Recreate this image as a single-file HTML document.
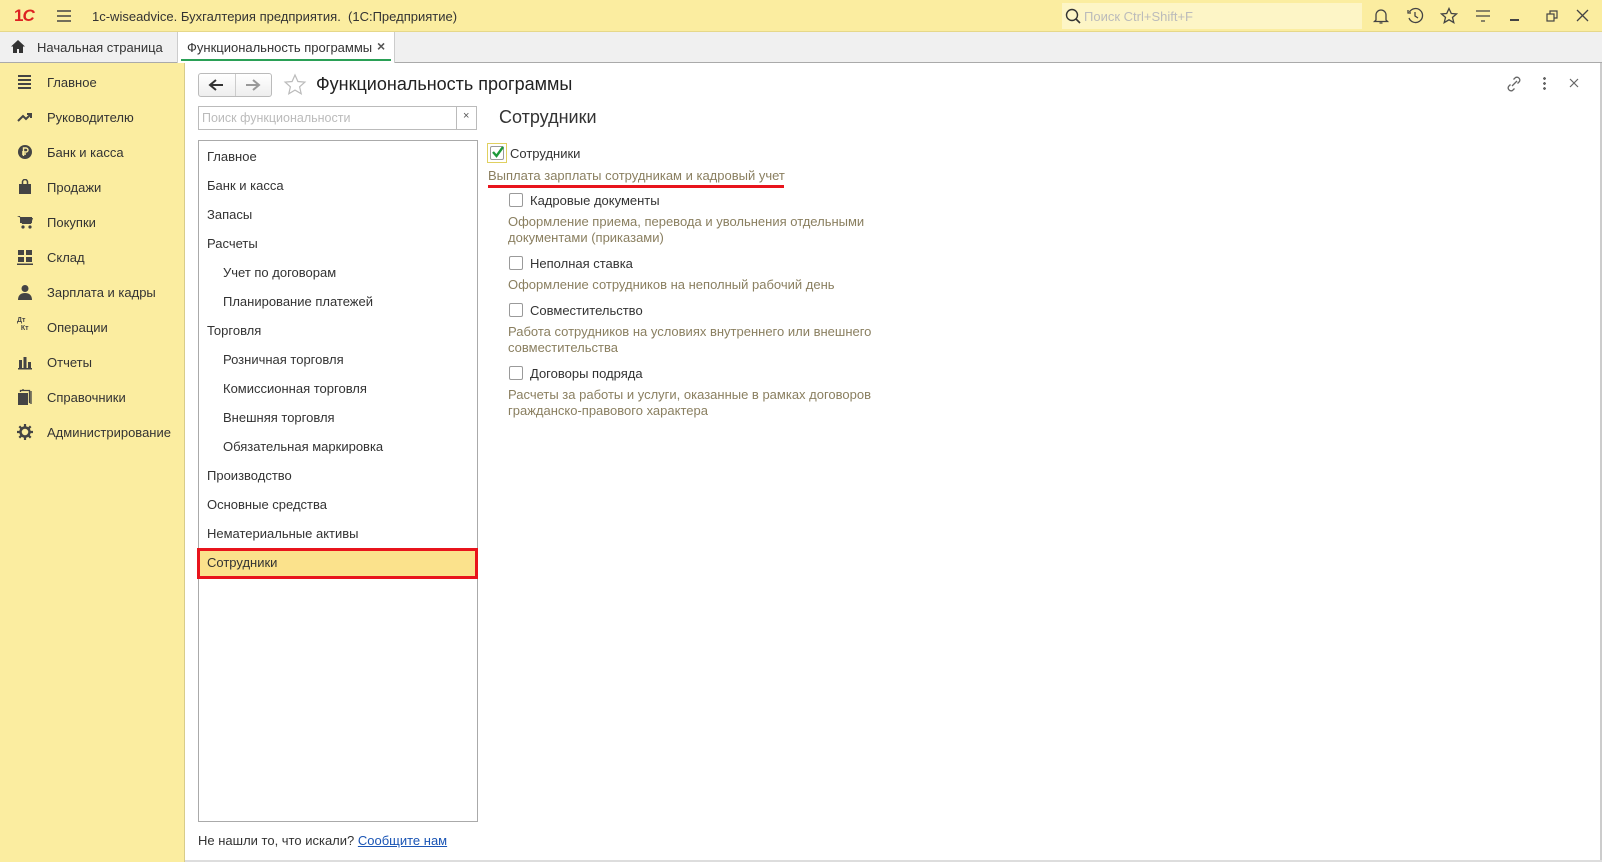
<!DOCTYPE html>
<html><head><meta charset="utf-8"><style>
*{box-sizing:border-box;margin:0;padding:0}
body{width:1602px;height:862px;overflow:hidden;background:#fff;font-family:"Liberation Sans",Arial,sans-serif;font-size:13px;color:#333;position:relative}
.abs{position:absolute}
#title{left:0;top:0;width:1602px;height:32px;background:#fbeda0;border-bottom:1px solid #e6d88a}
#tabs{left:0;top:32px;width:1602px;height:31px;background:#f0f0f0;border-bottom:1px solid #aaa}
#side{left:0;top:63px;width:185px;height:799px;background:#fbeda0;border-right:1px solid #d8cc8a}
.si{position:absolute;left:47px;font-size:13px;color:#333}
.ic{position:absolute;left:17px;width:16px;height:16px}
.li{position:absolute;left:8px;font-size:13px;color:#333}
.li.s{left:24px}
.cb{position:absolute;width:14px;height:14px;border:1px solid #9a9a9a;border-radius:2px;background:#fff}
.desc{position:absolute;color:#8a7f60;font-size:13px;line-height:16px}
.lbl{position:absolute;color:#333;font-size:13px}
</style></head><body>
<div id="title" class="abs">
 <div class="abs" style="left:14px;top:6px;color:#d22;font-weight:bold;font-size:17px;letter-spacing:-1px">1<span style="font-style:italic">C</span></div>
 <svg class="abs" style="left:57px;top:10px" width="14" height="12"><path d="M0 1h14M0 6h14M0 11h14" stroke="#444" stroke-width="1.4"/></svg>
 <div class="abs" style="left:92px;top:9px;font-size:13px;color:#333">1c-wiseadvice. Бухгалтерия предприятия.&nbsp; (1С:Предприятие)</div>
 <div class="abs" style="left:1062px;top:3px;width:300px;height:26px;background:#fdf5c6"></div>
 <svg class="abs" style="left:1065px;top:8px" width="16" height="16"><circle cx="7" cy="7" r="5.5" fill="none" stroke="#333" stroke-width="1.4"/><path d="M11 11l4 4" stroke="#333" stroke-width="1.6"/></svg>
 <div class="abs" style="left:1084px;top:9px;color:#bbb;font-size:13px">Поиск Ctrl+Shift+F</div>
 <svg class="abs" style="left:1372px;top:7px" width="18" height="18" fill="none" stroke="#444" stroke-width="1.3"><path d="M4 13V8a5 5 0 0110 0v5l1.5 1.5h-13z M7.5 16h3"/></svg>
 <svg class="abs" style="left:1406px;top:7px" width="18" height="18" fill="none" stroke="#444" stroke-width="1.3"><path d="M3.5 5A7 7 0 113 11M2 3v3h3M9 5v4l3 2"/></svg>
 <svg class="abs" style="left:1440px;top:7px" width="18" height="18" fill="none" stroke="#444" stroke-width="1.3"><path d="M9 1.5l2.3 5 5.2.4-4 3.5 1.3 5.2L9 12.8l-4.8 2.8 1.3-5.2-4-3.5 5.2-.4z"/></svg>
 <svg class="abs" style="left:1475px;top:8px" width="16" height="16" stroke="#444" stroke-width="1.3"><path d="M1 3h14M1 8h14M6 13h4"/></svg>
 <div class="abs" style="left:1510px;top:19px;width:9px;height:1.5px;background:#444"></div>
 <svg class="abs" style="left:1546px;top:10px" width="12" height="12" fill="none" stroke="#444" stroke-width="1.2"><rect x="1" y="4" width="7" height="7"/><path d="M4 4V1h7v7H8"/></svg>
 <svg class="abs" style="left:1576px;top:9px" width="13" height="13" stroke="#444" stroke-width="1.3"><path d="M1 1l11 11M12 1L1 12"/></svg>
</div>
<div id="tabs" class="abs">
 <svg class="abs" style="left:11px;top:8px" width="14" height="13"><path d="M7 0L0 6.5h2V13h4V9h2v4h4V6.5h2z" fill="#333"/></svg>
 <div class="abs" style="left:37px;top:8px;font-size:13px">Начальная страница</div>
 <div class="abs" style="left:177px;top:0;width:218px;height:31px;background:#fff;border-left:1px solid #ccc;border-right:1px solid #ccc"></div>
 <div class="abs" style="left:187px;top:8px;font-size:13px">Функциональность программы</div>
 <div class="abs" style="left:377px;top:6px;font-size:14px;font-weight:bold;color:#555">×</div>
 <div class="abs" style="left:181px;top:27px;width:210px;height:2px;background:#2aa056"></div>
</div>
<div id="side" class="abs">
 <svg class="ic" style="top:11px" viewBox="0 0 16 16"><path d="M1 2h13M1 6h13M1 10h13M1 14h13" stroke="#444" stroke-width="2"/></svg><div class="si" style="top:12px">Главное</div>
 <svg class="ic" style="top:46px" viewBox="0 0 16 16"><path d="M1 12l5-5 3 3 5-5M10 5h4v4" stroke="#444" stroke-width="2" fill="none"/></svg><div class="si" style="top:47px">Руководителю</div>
 <svg class="ic" style="top:81px" viewBox="0 0 16 16"><circle cx="8" cy="8" r="7" fill="#444"/><path d="M6.5 12V4h2.5a2 2 0 010 4H5M5 10h4" stroke="#fbeda0" stroke-width="1.4" fill="none"/></svg><div class="si" style="top:82px">Банк и касса</div>
 <svg class="ic" style="top:116px" viewBox="0 0 16 16"><rect x="2" y="5" width="12" height="10" fill="#444"/><path d="M5.5 6V3a2.5 2.5 0 015 0v3" stroke="#444" stroke-width="1.5" fill="none"/></svg><div class="si" style="top:117px">Продажи</div>
 <svg class="ic" style="top:151px" viewBox="0 0 16 16"><path d="M0 2h3l2 8h9l2-6H4" fill="#444"/><rect x="3" y="3" width="12" height="6" fill="#444"/><circle cx="6" cy="13" r="1.6" fill="#444"/><circle cx="13" cy="13" r="1.6" fill="#444"/></svg><div class="si" style="top:152px">Покупки</div>
 <svg class="ic" style="top:186px" viewBox="0 0 16 16"><rect x="1" y="1" width="6" height="5" fill="#444"/><rect x="9" y="1" width="6" height="5" fill="#444"/><rect x="1" y="8" width="6" height="5" fill="#444"/><rect x="9" y="8" width="6" height="5" fill="#444"/><rect x="0" y="14.5" width="16" height="1.5" fill="#444"/></svg><div class="si" style="top:187px">Склад</div>
 <svg class="ic" style="top:221px" viewBox="0 0 16 16"><circle cx="8" cy="4.5" r="3.5" fill="#444"/><path d="M1 16c0-5 3-7 7-7s7 2 7 7z" fill="#444"/></svg><div class="si" style="top:222px">Зарплата и кадры</div>
 <div class="ic" style="top:254px;font-size:7px;font-weight:bold;color:#444;line-height:8px">Дт<br>&nbsp;&nbsp;Кт</div><div class="si" style="top:257px">Операции</div>
 <svg class="ic" style="top:291px" viewBox="0 0 16 16"><rect x="2" y="6" width="3" height="8" fill="#444"/><rect x="6.5" y="3" width="3" height="11" fill="#444"/><rect x="11" y="8" width="3" height="6" fill="#444"/><rect x="1" y="14" width="14" height="1.5" fill="#444"/></svg><div class="si" style="top:292px">Отчеты</div>
 <svg class="ic" style="top:326px" viewBox="0 0 16 16"><rect x="1" y="4" width="10" height="12" fill="#444"/><path d="M3.5 3V1.5h9v12H12M6 1V0" stroke="#444" stroke-width="1.3" fill="none"/><path d="M14 2v13" stroke="#444" stroke-width="1.3"/></svg><div class="si" style="top:327px">Справочники</div>
 <svg class="ic" style="top:361px" viewBox="0 0 16 16"><circle cx="8" cy="8" r="4.5" fill="none" stroke="#444" stroke-width="2.5"/><path d="M8 0v4M8 12v4M0 8h4M12 8h4M2.3 2.3l2.8 2.8M10.9 10.9l2.8 2.8M2.3 13.7l2.8-2.8M10.9 5.1l2.8-2.8" stroke="#444" stroke-width="2.2"/></svg><div class="si" style="top:362px">Администрирование</div>
</div>
<!-- main -->
<div class="abs" style="left:198px;top:73px;width:74px;height:24px;border:1px solid #bbb;border-radius:3px;background:linear-gradient(#fff,#eee)"></div>
<div class="abs" style="left:235px;top:74px;width:1px;height:22px;background:#ccc"></div>
<svg class="abs" style="left:208px;top:78px" width="16" height="14"><path d="M15 7H3M8 2L2 7l6 5" stroke="#333" stroke-width="2" fill="none"/></svg>
<svg class="abs" style="left:245px;top:78px" width="16" height="14"><path d="M1 7h12M8 2l6 5-6 5" stroke="#999" stroke-width="2" fill="none"/></svg>
<svg class="abs" style="left:283px;top:73px" width="24" height="24"><path d="M12 2l2.9 6.5 7 .6-5.3 4.7 1.6 7L12 17.1l-6.2 3.7 1.6-7L2.1 9.1l7-.6z" fill="none" stroke="#bbb" stroke-width="1.2"/></svg>
<div class="abs" style="left:316px;top:74px;font-size:18px;color:#222">Функциональность программы</div>
<svg class="abs" style="left:1505px;top:75px" width="18" height="18" fill="none" stroke="#666" stroke-width="1.3"><path d="M7 11l5-5M8.5 4.5l2-2a3 3 0 014 4l-2 2M9.5 13.5l-2 2a3 3 0 01-4-4l2-2"/></svg>
<div class="abs" style="left:1543px;top:76px;width:3px;height:14px;background:radial-gradient(circle,#666 1.3px,transparent 1.5px) 0 0/3px 5px"></div>
<svg class="abs" style="left:1569px;top:78px" width="10" height="10" stroke="#666" stroke-width="1.2"><path d="M1 1l8 8M9 1L1 9"/></svg>

<div class="abs" style="left:198px;top:106px;width:279px;height:24px;border:1px solid #bbb;background:#fff"></div>
<div class="abs" style="left:456px;top:106px;width:1px;height:24px;background:#bbb"></div>
<div class="abs" style="left:202px;top:111px;color:#bbb;font-size:12.5px">Поиск функциональности</div>
<div class="abs" style="left:463px;top:110px;color:#555;font-size:11px">×</div>

<div class="abs" style="left:198px;top:140px;width:280px;height:682px;border:1px solid #aaa;background:#fff">
 <div class="li" style="top:8px">Главное</div>
 <div class="li" style="top:37px">Банк и касса</div>
 <div class="li" style="top:66px">Запасы</div>
 <div class="li" style="top:95px">Расчеты</div>
 <div class="li s" style="top:124px">Учет по договорам</div>
 <div class="li s" style="top:153px">Планирование платежей</div>
 <div class="li" style="top:182px">Торговля</div>
 <div class="li s" style="top:211px">Розничная торговля</div>
 <div class="li s" style="top:240px">Комиссионная торговля</div>
 <div class="li s" style="top:269px">Внешняя торговля</div>
 <div class="li s" style="top:298px">Обязательная маркировка</div>
 <div class="li" style="top:327px">Производство</div>
 <div class="li" style="top:356px">Основные средства</div>
 <div class="li" style="top:385px">Нематериальные активы</div>
 <div class="abs" style="left:-2px;top:407px;width:281px;height:31px;background:#fbe28c;border:3px solid #e8141c"></div>
 <div class="li" style="top:414px">Сотрудники</div>
</div>
<div class="abs" style="left:198px;top:833px;font-size:13px;color:#333">Не нашли то, что искали? <span style="color:#1a55b5;text-decoration:underline">Сообщите нам</span></div>

<div class="abs" style="left:499px;top:107px;font-size:18px;color:#333">Сотрудники</div>
<div class="abs" style="left:487px;top:143px;width:20px;height:20px;border:1px solid #e0d060"></div>
<div class="cb" style="left:490px;top:146px"></div>
<svg class="abs" style="left:491px;top:145px" width="14" height="14"><path d="M2 7l3.5 4L12 2" stroke="#1e9a3a" stroke-width="2.4" fill="none"/></svg>
<div class="lbl" style="left:510px;top:146px">Сотрудники</div>
<div class="desc" style="left:488px;top:168px">Выплата зарплаты сотрудникам и кадровый учет</div>
<div class="abs" style="left:488px;top:185px;width:296px;height:3px;background:#e8141c"></div>

<div class="cb" style="left:509px;top:193px"></div><div class="lbl" style="left:530px;top:193px">Кадровые документы</div>
<div class="desc" style="left:508px;top:214px">Оформление приема, перевода и увольнения отдельными<br>документами (приказами)</div>
<div class="cb" style="left:509px;top:256px"></div><div class="lbl" style="left:530px;top:256px">Неполная ставка</div>
<div class="desc" style="left:508px;top:277px">Оформление сотрудников на неполный рабочий день</div>
<div class="cb" style="left:509px;top:303px"></div><div class="lbl" style="left:530px;top:303px">Совместительство</div>
<div class="desc" style="left:508px;top:324px">Работа сотрудников на условиях внутреннего или внешнего<br>совместительства</div>
<div class="cb" style="left:509px;top:366px"></div><div class="lbl" style="left:530px;top:366px">Договоры подряда</div>
<div class="desc" style="left:508px;top:387px">Расчеты за работы и услуги, оказанные в рамках договоров<br>гражданско-правового характера</div>
<div class="abs" style="left:1600px;top:63px;width:2px;height:799px;background:#ccc"></div>
<div class="abs" style="left:185px;top:860px;width:1417px;height:2px;background:#ddd"></div>
</body></html>
